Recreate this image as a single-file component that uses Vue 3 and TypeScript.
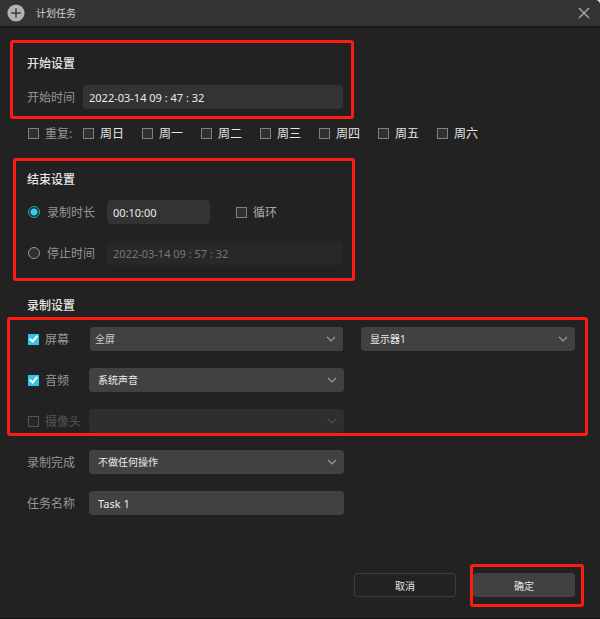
<script setup lang="ts">
import { ref } from 'vue'

interface Day {
  id: string
  label: string
  checked: boolean
}

interface SourceRow {
  id: string
  label: string
  options: string[]
  checked: boolean
  disabled: boolean
}

const startTime = ref('2022-03-14 09 : 47 : 32')
const stopTime = ref('2022-03-14 09 : 57 : 32')
const duration = ref('00:10:00')
const endMode = ref<'duration' | 'stop'>('duration')
const repeat = ref(false)
const loop = ref(false)
const taskName = ref('Task 1')

const days = ref<Day[]>([
  { id: 'sun', label: '周日', checked: false },
  { id: 'mon', label: '周一', checked: false },
  { id: 'tue', label: '周二', checked: false },
  { id: 'wed', label: '周三', checked: false },
  { id: 'thu', label: '周四', checked: false },
  { id: 'fri', label: '周五', checked: false },
  { id: 'sat', label: '周六', checked: false },
])

const sources = ref<SourceRow[]>([
  { id: 'screen', label: '屏幕', options: ['全屏'], checked: true, disabled: false },
  { id: 'audio', label: '音频', options: ['系统声音'], checked: true, disabled: false },
  { id: 'camera', label: '摄像头', options: [''], checked: false, disabled: true },
])
</script>

<template>
  <main class="dialog">
    <header class="titlebar">
      <svg class="logo" viewBox="0 0 18 18" aria-hidden="true">
        <circle cx="9" cy="9" r="8.6" fill="#b2b2b2" />
        <path d="M9 4.2v9.6M4.2 9h9.6" stroke="#3b3b3b" stroke-width="1.5" />
      </svg>
      <h1>计划任务</h1>
      <button class="close" type="button" aria-label="关闭">
        <svg viewBox="0 0 12 12"><path d="M1 1l10 10M11 1L1 11" stroke="#a3a3a3" stroke-width="1.5" fill="none" /></svg>
      </button>
    </header>

    <form class="content" @submit.prevent>
      <section class="group marked start">
        <h2>开始设置</h2>
        <div class="row">
          <label class="caption" for="start">开始时间</label>
          <input id="start" v-model="startTime" class="field wide" type="text" />
        </div>
      </section>

      <div class="row days">
        <label class="option repeat"><input v-model="repeat" type="checkbox" />重复:</label>
        <label v-for="day in days" :key="day.id" class="option day">
          <input v-model="day.checked" type="checkbox" />{{ day.label }}
        </label>
      </div>

      <section class="group marked end">
        <h2>结束设置</h2>
        <div class="row">
          <label class="option mode"><input v-model="endMode" type="radio" name="end" value="duration" />录制时长</label>
          <input v-model="duration" class="field short" type="text" aria-label="录制时长" />
          <label class="option loop"><input v-model="loop" type="checkbox" />循环</label>
        </div>
        <div class="row">
          <label class="option mode"><input v-model="endMode" type="radio" name="end" value="stop" />停止时间</label>
          <input v-model="stopTime" class="field fill" type="text" aria-label="停止时间" :disabled="endMode !== 'stop'" />
        </div>
      </section>

      <h2 class="record-title">录制设置</h2>
      <section class="rows marked record">
        <div v-for="row in sources" :key="row.id" class="grid-row">
          <label class="option" :class="{ off: row.disabled }">
            <input v-model="row.checked" type="checkbox" :disabled="row.disabled" />{{ row.label }}
          </label>
          <div class="picker" :class="[row.id, { off: row.disabled }]">
            <select :aria-label="row.label" :disabled="row.disabled">
              <option v-for="o in row.options" :key="o">{{ o }}</option>
            </select>
            <svg viewBox="0 0 10 6" aria-hidden="true"><path d="M1 1l4 4 4-4" /></svg>
          </div>
          <div v-if="row.id === 'screen'" class="picker">
            <select aria-label="显示器">
              <option>显示器1</option>
            </select>
            <svg viewBox="0 0 10 6" aria-hidden="true"><path d="M1 1l4 4 4-4" /></svg>
          </div>
        </div>
      </section>

      <div class="rows after">
        <div class="grid-row">
          <label class="caption" for="finish">录制完成</label>
          <div class="picker">
            <select id="finish">
              <option>不做任何操作</option>
            </select>
            <svg viewBox="0 0 10 6" aria-hidden="true"><path d="M1 1l4 4 4-4" /></svg>
          </div>
        </div>
        <div class="grid-row">
          <label class="caption" for="task">任务名称</label>
          <input id="task" v-model="taskName" class="field name" type="text" />
        </div>
      </div>

      <footer class="actions">
        <button class="btn" type="button">取消</button>
        <div class="marked confirm"><button class="btn primary" type="submit">确定</button></div>
      </footer>
    </form>
  </main>
</template>

<style>
body {
  margin: 0;
  background: #e4e4e4;
}
</style>

<style scoped>
.dialog,
.dialog * {
  box-sizing: border-box;
}
.dialog {
  display: flex;
  flex-direction: column;
  min-height: 100vh;
  border-bottom: 1px solid #151515;
  border-top-right-radius: 5px;
  background: #222;
  color: #e6e6e6;
  font: 12px/24px "Noto Sans", "Noto Sans CJK SC", sans-serif;
  overflow: hidden;
}
.titlebar {
  display: flex;
  align-items: center;
  height: 28px;
  padding: 0 10px 0 7px;
  border-bottom: 2px solid #191919;
  background: #333;
}
.logo {
  width: 18px;
  height: 18px;
}
h1 {
  flex: 1;
  margin: 0 0 0 11px;
  color: #d0d0d0;
  font-size: 10px;
  font-weight: 400;
}
h2 {
  height: 24px;
  margin: 0;
  padding-top: 1px;
  font-size: 12px;
  font-weight: 500;
}
button {
  font-family: inherit;
  cursor: pointer;
}
.close {
  display: flex;
  padding: 0;
  border: 0;
  background: none;
}
.close svg {
  width: 12px;
  height: 12px;
}
.content {
  display: flex;
  flex: 1;
  flex-direction: column;
  padding: 23px 25px 21px 27px;
}
.row {
  display: flex;
  align-items: center;
}
.group {
  display: flex;
  flex-direction: column;
  width: 317px;
}

/* red callout frames drawn over the groups */
.marked {
  position: relative;
}
.marked::after {
  position: absolute;
  border: 3px solid #fb1d10;
  border-radius: 3px;
  content: "";
  pointer-events: none;
}
.start::after {
  inset: -11px -10px -10px -17px;
}
.end::after {
  inset: -9px -11px -16px -14px;
}
.record::after {
  inset: -10px -13px -3px -20px;
}
.confirm::after {
  inset: -9px -9px -10px -3px;
}

.start {
  gap: 10px;
}
.days {
  margin-top: 12px;
}
.repeat {
  width: 55px;
}
.day {
  width: 59px;
}
.end {
  margin-top: 22px;
}
.end .row + .row {
  margin-top: 17px;
}
.end h2 {
  margin-bottom: 9px;
}
.mode {
  width: 80px;
}
.option.loop {
  margin-left: 25px;
  color: #a8a8a8;
}
.caption,
.option {
  flex: none;
  height: 24px;
  color: #969696;
  white-space: nowrap;
}
.caption {
  width: 56px;
  padding-top: 1px;
}
.option {
  display: flex;
  align-items: center;
  padding-top: 2px;
}
.option.day {
  color: #e6e6e6;
}
.option.off {
  color: #555;
}

input[type="checkbox"],
input[type="radio"] {
  flex: none;
  width: 11px;
  height: 11px;
  margin: 0 6px 2px 1px;
  border: 1px solid #808080;
  background: #303030;
  appearance: none;
}
input[type="checkbox"]:checked {
  border-color: #2fc4e8;
  background: #2fc4e8;
}
input[type="checkbox"]:checked::before {
  display: block;
  width: 3px;
  height: 6px;
  margin: -1px auto 0;
  border: solid #fff;
  border-width: 0 2px 2px 0;
  content: "";
  transform: rotate(40deg);
}
input[type="checkbox"]:disabled {
  border-color: #555;
  background: #262626;
}
input[type="radio"] {
  width: 12px;
  height: 12px;
  margin-right: 7px;
  border-color: #999;
  border-radius: 50%;
}
input[type="radio"]:checked {
  border-color: #2ba9c2;
  background: radial-gradient(circle, #3bcdf0 3px, #202a2c 4px);
}

.field,
select {
  min-width: 0;
  height: 24px;
  border: 0;
  border-radius: 4px;
  outline: 0;
  background: #333;
  color: #ececec;
  font-family: inherit;
}
.field {
  padding: 0 6px;
  font-size: 11px;
}
.wide {
  flex: none;
  width: 260px;
}
.short {
  width: 103px;
}
.fill {
  width: 236px;
}
.field:disabled {
  background: #282828;
  color: #777;
}
.name {
  padding: 0 9px;
  background: #414141;
}

.record-title {
  margin: 28px 0 10px;
}
.rows {
  display: grid;
  gap: 17px;
}
.after {
  margin-top: 17px;
}
.grid-row {
  display: grid;
  grid-template-columns: 62px 255px minmax(120px, 1fr);
  align-items: center;
}
.picker {
  position: relative;
  display: flex;
}
.picker + .picker {
  margin-left: 17px;
}
.picker select {
  width: 100%;
  padding: 0 24px 0 9px;
  background: #414141;
  font-size: 10px;
  appearance: none;
}
.picker.screen {
  margin: 0 1px;
}
.picker.screen select {
  padding-left: 5px;
  border-radius: 4px 2px 2px 4px;
  color: #ccc;
}
.picker.off select {
  background: #2e2e2e;
  opacity: 1;
}
.picker svg {
  position: absolute;
  top: 9px;
  right: 7px;
  width: 10px;
  height: 6px;
  fill: none;
  stroke: #999;
  stroke-width: 1.2;
  pointer-events: none;
}
.picker.off svg {
  stroke: #4c4c4c;
}

.actions {
  display: flex;
  justify-content: flex-end;
  gap: 17px;
  margin-top: auto;
  padding-top: 24px;
}
.btn {
  display: block;
  width: 102px;
  height: 24px;
  padding: 0;
  border: 1px solid #3d3d3d;
  border-radius: 3px;
  background: transparent;
  color: #e6e6e6;
  font-size: 10px;
}
.primary {
  border-color: #414141;
  background: #414141;
}
</style>
